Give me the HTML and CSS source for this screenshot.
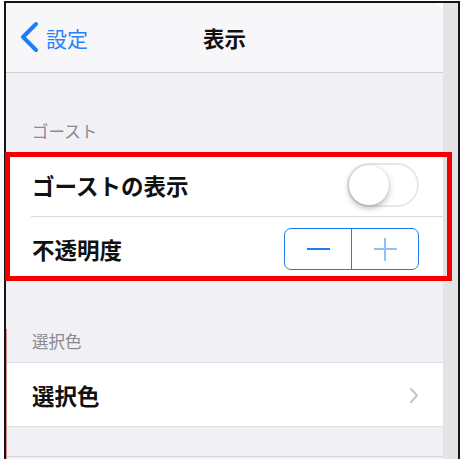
FILE: index.html
```html
<!DOCTYPE html>
<html lang="ja">
<head>
<meta charset="utf-8">
<link rel="stylesheet" href="styles.css">
</head>
<body>
<div class="frame">
  <div class="panel">
    <div class="nav">
      <div class="back">
        <svg class="back-icon" width="20" height="32" viewBox="0 0 20 32"><polyline points="16,3 3,16 16,29" fill="none" stroke="#1a7ef5" stroke-width="4" stroke-linecap="round" stroke-linejoin="round"/></svg>
        <span class="back-label">設定</span>
      </div>
      <div class="title">表示</div>
      <div></div>
    </div>
    <div class="section-header first">ゴースト</div>
    <div class="group">
      <div class="row">
        <span class="row-label">ゴーストの表示</span>
        <div class="toggle"><div class="knob"></div></div>
      </div>
      <div class="row">
        <span class="row-label">不透明度</span>
        <div class="stepper">
          <div class="step"><span class="minus"></span></div>
          <div class="step"><span class="plus"></span></div>
        </div>
      </div>
    </div>
    <div class="section-header second">選択色</div>
    <div class="group bordered">
      <div class="row">
        <span class="row-label">選択色</span>
        <svg class="chev" width="10" height="17" viewBox="0 0 10 17"><polyline points="2,2 8,8.5 2,15" fill="none" stroke="#c4c4c8" stroke-width="2" stroke-linecap="round" stroke-linejoin="round"/></svg>
      </div>
    </div>
    <div class="filler"></div>
  </div>
  <div class="strip"></div>
  <div class="highlight"></div>
  <div class="edge-mark"></div>
</div>
</body>
</html>
```
FILE: styles.css
```css
* { box-sizing: border-box; }
html, body { margin: 0; padding: 0; background: #ffffff; }
body {
  font-family: "Noto Sans CJK JP", "Noto Sans", sans-serif;
  width: 463px;
  height: 462px;
  overflow: hidden;
}
.frame {
  position: relative;
  margin: 1px 0 0 4px;
  width: 456px;
  height: 458px;
  border: 2px solid #151515;
  border-bottom: none;
  display: flex;
}
.panel {
  width: 437px;
  display: flex;
  flex-direction: column;
  background: #f0f0f5;
  border-top-right-radius: 12px;
  overflow: hidden;
}
.strip {
  flex: 1;
  background: #e4e4e6;
}
.nav {
  height: 70px;
  background: #f7f7f9;
  border-bottom: 1px solid #cfcfd3;
  display: grid;
  grid-template-columns: 1fr auto 1fr;
  align-items: center;
}
.back {
  display: flex;
  align-items: center;
  padding-left: 14px;
  gap: 6px;
}
.back-icon { display: block; margin-top: -1px; }
.back-label {
  color: #2a80f4;
  font-size: 21px;
  line-height: 24px;
}
.title {
  font-size: 21.5px;
  font-weight: 700;
  color: #111;
  line-height: 24px;
}
.section-header {
  color: #8a8a8f;
  font-size: 16.5px;
  line-height: 20px;
  padding-left: 26px;
}
.section-header.first { height: 80px; padding-top: 48px; }
.section-header.second { height: 82px; padding-top: 51px; }
.group { background: #ffffff; }
.group.bordered {
  border-top: 1px solid #dcdce0;
  border-bottom: 1px solid #dcdce0;
}
.row {
  height: 63px;
  display: flex;
  align-items: center;
  justify-content: space-between;
  padding: 0 24px 0 26px;
  position: relative;
}
.group .row + .row { height: 64px; border-top: 1px solid #dcdce0; margin-left: 25px; padding-left: 1px; }
.row-label {
  font-size: 22.5px;
  font-weight: 700;
  color: #111;
  line-height: 28px;
}
.toggle {
  width: 72px;
  height: 44px;
  border-radius: 22px;
  border: 2px solid #e7e7e9;
  background: #fff;
  position: relative;
}
.knob {
  position: absolute;
  left: 0;
  top: 0;
  width: 40px;
  height: 40px;
  border-radius: 50%;
  background: #fff;
  box-shadow: 0 3px 6px rgba(0,0,0,0.28), 0 0 1px rgba(0,0,0,0.2);
}
.stepper {
  width: 135px;
  height: 42px;
  border: 1.5px solid #1b7cf3;
  border-radius: 7px;
  display: flex;
  margin-top: 1px;
}
.step {
  flex: 1;
  display: flex;
  align-items: center;
  justify-content: center;
}
.step + .step { border-left: 1.5px solid #1b7cf3; }
.minus {
  width: 23px;
  height: 2.5px;
  background: #1b7cf3;
}
.plus {
  position: relative;
  width: 23px;
  height: 23px;
}
.plus::before, .plus::after {
  content: "";
  position: absolute;
  background: #8fc1f8;
}
.plus::before { left: 0; right: 0; top: 10.5px; height: 2px; }
.plus::after { top: 0; bottom: 0; left: 10.5px; width: 2px; }
.chev { display: block; margin-top: 2px; }
.filler {
  height: 30px;
  border-bottom: 1px solid #d6d6da;
}
.highlight {
  position: absolute;
  left: -1px;
  top: 149px;
  width: 447px;
  height: 129px;
  border: 5px solid #f20000;
  pointer-events: none;
}
.edge-mark {
  position: absolute;
  left: 0;
  top: 326px;
  bottom: 0;
  width: 1px;
  background: #d88a8a;
}
```
